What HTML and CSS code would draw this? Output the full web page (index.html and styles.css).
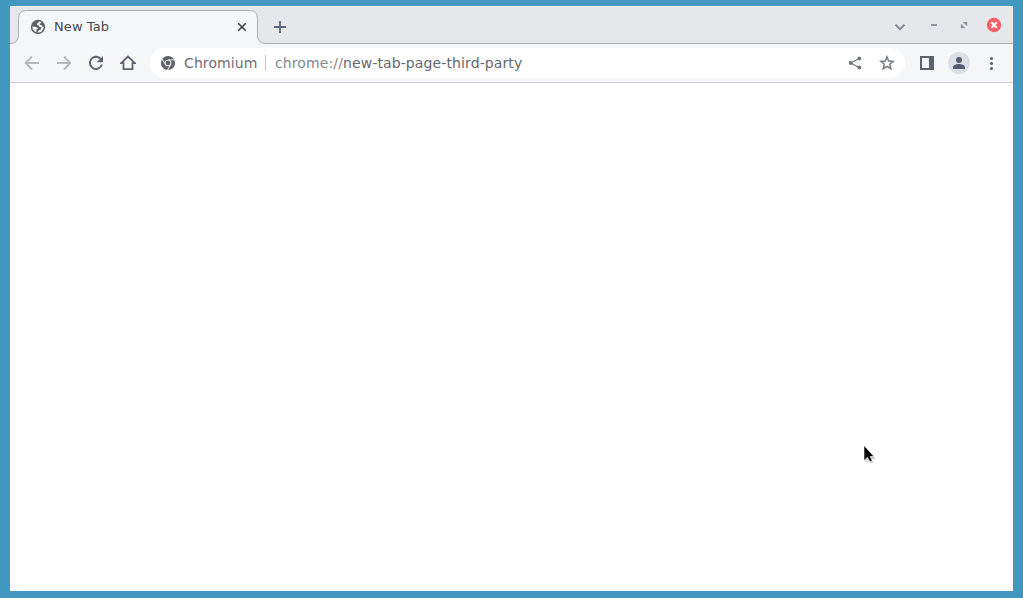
FILE: index.html
```html
<!DOCTYPE html>
<html lang="en">
<head>
<meta charset="utf-8">
<title>New Tab</title>
<link rel="stylesheet" href="styles.css">
</head>
<body>
<div class="window">
  <header class="tabstrip">
    <div class="tab">
      <svg class="tab-shape" width="256" height="38" viewBox="0 0 256 38">
        <path d="M0 38V37.500C5.500 37.500 8.500 34.500 8.500 29.500V12.500Q8.500 4.500 16.500 4.500H239.500Q247.500 4.500 247.500 12.500V29.500C247.500 34.500 250.500 37.500 256 37.500V38Z" fill="#f5f6f8"/>
        <path d="M0 37.500C5.500 37.500 8.500 34.500 8.500 29.500V12.500Q8.500 4.500 16.500 4.500H239.500Q247.500 4.500 247.500 12.500V29.500C247.500 34.500 250.500 37.500 256 37.500" fill="none" stroke="#abadb1"/>
      </svg>
      <svg class="icon globe" viewBox="0 0 16 16">
        <circle cx="8" cy="8" r="7.200" fill="#5f6368"/>
        <path d="M8.800 2.300 8.600 3.700 7 4.400 7.200 6 8.700 6.500 9 7.800 11.500 8.200 10.600 10.800 8.400 11.600 7.400 13.600C10.800 13.900 13.600 11.200 13.600 8L12.200 7.600 11.700 6.300 9.800 5.900 10 4.800 11.500 3.600ZM2.300 7.600 4.200 7.800 7 8.200 8 9.800 6.400 10.600 6.200 13.300C3.900 12.500 2.200 10.200 2.300 7.600Z" fill="#f5f6f8"/>
      </svg>
      <span class="tab-title">New Tab</span>
      <svg class="icon" viewBox="0 0 16 16"><path d="M4.200 4.200 11.800 11.800M11.800 4.200 4.200 11.800" stroke="#3c4043" stroke-width="1.600"/></svg>
    </div>
    <svg class="icon new-tab" viewBox="0 0 16 16"><path d="M8 2V14M2 8H14" stroke="#5c6680" stroke-width="1.800"/></svg>
    <div class="controls">
      <svg class="icon chevron" viewBox="0 0 16 16"><path d="M3.500 5.700 8 10.200 12.500 5.700" fill="none" stroke="#7b8295" stroke-width="1.900"/></svg>
      <svg class="icon" viewBox="0 0 16 16"><path d="M5 7H11V9H5Z" fill="#9094a2"/></svg>
      <svg class="icon" viewBox="0 0 16 16"><path d="M7 5H11V9ZM5 7V11H9Z" fill="#8b8f9c" stroke="#8b8f9c" stroke-width=".3"/></svg>
      <svg class="icon" viewBox="0 0 16 16"><circle cx="8" cy="8" r="7.200" fill="#fc5d65"/><path d="M5.300 5.300 10.700 10.700M10.700 5.300 5.300 10.700" stroke="#fff" stroke-width="2.100"/></svg>
    </div>
  </header>
  <div class="toolbar">
    <nav class="nav">
      <svg class="icon" viewBox="0 0 16 16"><path d="M15 8H2M8 1.500 1.700 8 8 14.500" fill="none" stroke="#b3b6bc" stroke-width="1.800"/></svg>
      <svg class="icon" viewBox="0 0 16 16"><path d="M1 8H14M8 1.500 14.300 8 8 14.500" fill="none" stroke="#b3b6bc" stroke-width="1.800"/></svg>
      <svg class="icon" viewBox="0 0 16 16"><path d="M12.500 3.700A6.100 6.100 0 1 0 13.900 9.600" fill="none" stroke="#5c6370" stroke-width="1.900"/><path d="M15 1V7.300H8.700Z" fill="#5c6370"/></svg>
      <svg class="icon" viewBox="0 0 16 16"><path d="M1.200 8.200H3.500V14.200H12.500V8.200H14.800L8 1.500Z" fill="none" stroke="#5c6370" stroke-width="1.800"/></svg>
    </nav>
    <div class="omnibox">
      <svg class="icon" viewBox="0 0 16 16">
        <circle cx="8" cy="8" r="7.100" fill="#5f6368"/>
        <circle cx="8" cy="8" r="3.300" fill="#fff"/>
        <path d="M8 4.900H14.500M5.300 9.550 2 3.900M10.700 9.550 7.400 15.300" stroke="#fff" stroke-width=".9"/>
        <circle cx="8" cy="8" r="2.400" fill="#5f6368"/>
      </svg>
      <span class="chip">Chromium</span>
      <span class="separator"></span>
      <span class="url"><span class="scheme">chrome://</span>new-tab-page-third-party</span>
      <svg class="icon share" viewBox="0 0 16 16"><path d="M12.300 3.500 3.700 8 12.300 12.500" fill="none" stroke="#74777e" stroke-width="1.300"/><g fill="#74777e"><circle cx="12.300" cy="3.500" r="1.900"/><circle cx="3.700" cy="8" r="1.900"/><circle cx="12.300" cy="12.500" r="1.900"/></g></svg>
      <svg class="icon" viewBox="0 0 16 16"><path d="M8 2 9.700 6.100 14.100 6.400 10.800 9.300 11.800 13.700 8 11.400 4.200 13.700 5.200 9.300 1.900 6.400 6.300 6.100Z" fill="none" stroke="#74777e" stroke-width="1.500"/></svg>
    </div>
    <svg class="icon panel" viewBox="0 0 16 16"><path d="M1 1H15V15H1ZM3 3V13H10V3Z" fill="#5c6370" fill-rule="evenodd"/></svg>
    <span class="avatar"><svg class="icon" viewBox="0 0 16 16"><circle cx="8" cy="5" r="3" fill="#555d73"/><path d="M2 14V12.200C2 9.900 5.500 9 8 9S14 9.900 14 12.200V14Z" fill="#555d73"/></svg></span>
    <svg class="icon menu" viewBox="0 0 16 16"><g fill="#5c6370"><circle cx="8.500" cy="3.500" r="1.600"/><circle cx="8.500" cy="8.500" r="1.600"/><circle cx="8.500" cy="13.500" r="1.600"/></g></svg>
  </div>
  <main class="page"></main>
</div>
<svg class="cursor" width="16" height="22" viewBox="0 0 16 22">
  <path d="M2.500 4.500V19L5.600 15.800 8.300 19.800 10.600 18.600 8.900 15.200H12.800Z" fill="#000" opacity=".2"/>
  <path d="M1 1.500V16.500L4.400 13.300 7 17.700 9.200 16.600 7 12.500H11Z" fill="#000" stroke="#fff" stroke-width=".6"/>
</svg>
</body>
</html>
```
FILE: styles.css
```css
* { box-sizing: border-box; }
body {
  margin: 0;
  height: 598px;
  padding: 6px 10px 7px;
  background: #4098bf;
  font-family: "DejaVu Sans", sans-serif;
  overflow: hidden;
}
.window {
  height: 585px;
  display: flex;
  flex-direction: column;
  background: #fff;
}
.icon { width: 16px; height: 16px; flex: none; display: block; }
.tabstrip {
  height: 38px;
  flex: none;
  display: flex;
  background: #e6e7eb;
  border-top: 1px solid #eff0f2;
  box-shadow: inset 0 -1px #abadb1;
}
.tab {
  position: relative;
  width: 256px;
  height: 38px;
  margin-top: -1px;
  padding: 4px 16px 0 20px;
  display: flex;
  align-items: center;
}
.tab > * { position: relative; }
.tab > .tab-shape { position: absolute; left: 0; top: 0; }
.tab-title {
  flex: 1;
  margin-left: 8px;
  font-size: 13px;
  line-height: 16px;
  letter-spacing: .1px;
  color: #45484d;
}
.new-tab { margin: 12px 0 0 6px; }
.controls {
  margin: 10px 11px 0 auto;
  display: flex;
  gap: 14px;
}
.chevron { margin: 2px 4px 0 0; }
.toolbar {
  height: 39px;
  flex: none;
  display: flex;
  align-items: center;
  background: #f5f6f8;
  border-bottom: 1px solid #c7d0e2;
}
.nav { display: flex; gap: 16px; padding: 0 14px; }
.omnibox {
  width: 755px;
  height: 30px;
  padding: 0 10px;
  border-radius: 15px;
  background: #fff;
  display: flex;
  align-items: center;
  font-size: 14px;
  line-height: 18px;
  letter-spacing: .11px;
}
.chip { width: 74px; margin-left: 8px; color: #6b6e74; }
.separator { width: 1px; height: 16px; margin: 0 9px 0 7px; background: #c2c4c8; }
.url { flex: 1; color: #64676e; white-space: nowrap; }
.scheme { color: #85878b; }
.share { margin-right: 16px; }
.panel { margin-left: 14px; }
.avatar {
  width: 22px;
  height: 22px;
  margin: 0 13px;
  border-radius: 50%;
  background: #dcdee5;
  display: flex;
  align-items: center;
  justify-content: center;
}
.page { flex: 1; background: #fff; }
.cursor { position: absolute; left: 863px; top: 444px; }
```
